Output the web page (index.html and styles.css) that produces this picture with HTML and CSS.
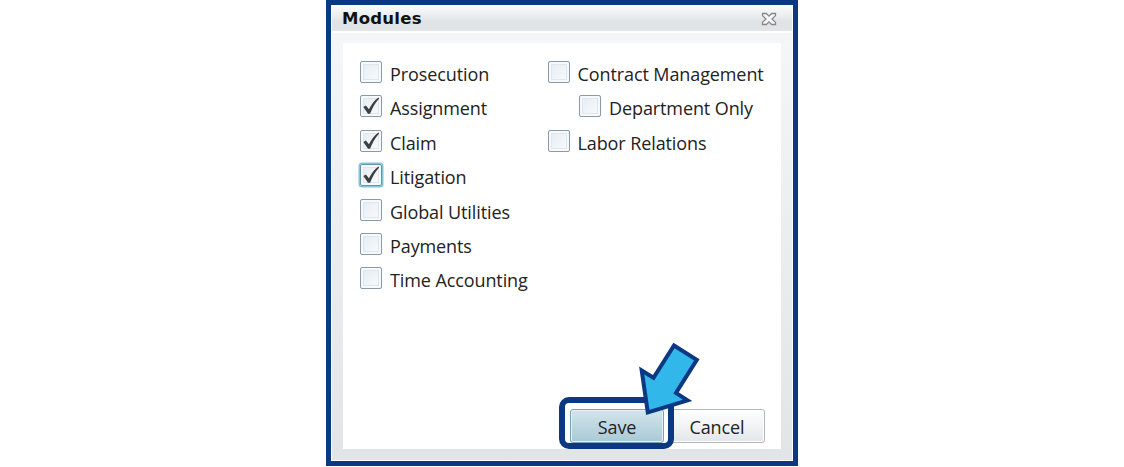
FILE: index.html
```html
<!DOCTYPE html>
<html lang="en">
<head>
    <meta charset="UTF-8">
    <meta name="viewport" content="width=device-width, initial-scale=1.0">
    <title>Modules</title>
    <link rel="stylesheet" href="styles.css">
</head>
<body>
    <div class="dialog">
        <div class="dialog-header">
            <span class="dialog-title">Modules</span>
            <svg class="close-btn" width="16" height="14" viewBox="0 0 16 14">
                <path d="M1.5 1.5H5.3L8 4.2L10.7 1.5H14.5V3.6L11 7L14.5 10.4V12.5H10.7L8 9.8L5.3 12.5H1.5V10.4L5 7L1.5 3.6Z"/>
            </svg>
        </div>
        <div class="dialog-body">
            <div class="panel">
                <div class="modules">
                    <div class="column">
                        <div class="option"><span class="box"></span><span class="label">Prosecution</span></div>
                        <div class="option"><span class="box"><svg class="check" viewBox="0 0 18 18"><path d="M2 9.5L4.2 8.2L6.8 11.4C9 7 11.5 3.5 15 1.2L15.6 2.1C12 6 9.6 10.5 7.8 15.2H6Z"/></svg></span><span class="label">Assignment</span></div>
                        <div class="option"><span class="box"><svg class="check" viewBox="0 0 18 18"><path d="M2 9.5L4.2 8.2L6.8 11.4C9 7 11.5 3.5 15 1.2L15.6 2.1C12 6 9.6 10.5 7.8 15.2H6Z"/></svg></span><span class="label">Claim</span></div>
                        <div class="option"><span class="box focused"><svg class="check" viewBox="0 0 18 18"><path d="M2 9.5L4.2 8.2L6.8 11.4C9 7 11.5 3.5 15 1.2L15.6 2.1C12 6 9.6 10.5 7.8 15.2H6Z"/></svg></span><span class="label">Litigation</span></div>
                        <div class="option"><span class="box"></span><span class="label">Global Utilities</span></div>
                        <div class="option"><span class="box"></span><span class="label">Payments</span></div>
                        <div class="option"><span class="box"></span><span class="label">Time Accounting</span></div>
                    </div>
                    <div class="column">
                        <div class="option"><span class="box"></span><span class="label">Contract Management</span></div>
                        <div class="option sub"><span class="box"></span><span class="label">Department Only</span></div>
                        <div class="option"><span class="box"></span><span class="label">Labor Relations</span></div>
                    </div>
                </div>
                <div class="actions">
                    <button class="btn save-btn">Save</button>
                    <button class="btn cancel-btn">Cancel</button>
                </div>
            </div>
        </div>
        <div class="highlight"></div>
        <svg class="arrow" width="64" height="76" viewBox="636 340 64 76">
            <path d="M674 345.5L696.8 359.8L676 393L687.5 400.3L647.8 412.3L641.7 370.5L653.5 377.8Z"/>
        </svg>
    </div>
</body>
</html>
```

FILE: styles.css
```css
body {
    margin: 0;
    background: #fff;
    font-family: 'Open Sans', 'Noto Sans', sans-serif;
    color: #222;
}
.dialog {
    position: relative;
    box-sizing: border-box;
    width: 472px;
    height: 466px;
    margin-left: 326px;
    border: 5px solid #0b3882;
    display: flex;
    flex-direction: column;
}
.dialog-header {
    box-sizing: border-box;
    height: 26px;
    margin: 0 1px;
    padding: 0 15px 0 10px;
    display: flex;
    align-items: center;
    justify-content: space-between;
    background: linear-gradient(#fdfdfd, #e0e3e6 65%, #e2e5e8);
}
.dialog-title {
    font: bold 16.5px/26px 'DejaVu Sans', sans-serif;
    letter-spacing: 0.25px;
    padding-top: 2px;
    color: #111;
}
.close-btn {
    padding-top: 1px;
}
.close-btn path {
    fill: #f6f6f6;
    stroke: #888;
    stroke-width: 1.3;
}
.dialog-body {
    flex: 1;
    display: flex;
    margin: 2px 1px 1px;
    padding: 10px 11px 11px;
    background: linear-gradient(#f4f6f8, #e1e5e8);
}
.panel {
    flex: 1;
    display: flex;
    flex-direction: column;
    justify-content: space-between;
    background: #fff;
}
.modules {
    display: flex;
    padding: 11.8px 0 0 17px;
}
.column {
    width: 187.5px;
}
.option {
    height: 34.4px;
    display: flex;
    align-items: center;
    gap: 8px;
    white-space: nowrap;
}
.option.sub {
    margin-left: 31.5px;
}
.box {
    box-sizing: border-box;
    flex: none;
    width: 22px;
    height: 22px;
    border: 1.5px solid #8a9aa8;
    border-radius: 2px;
    background: linear-gradient(135deg, #e3ebf3, #fafcfe);
    box-shadow: inset 0 0 0 2px #f7fafc, inset 0 0 0 3px #dfe6ec;
}
.box.focused {
    border-color: #5f97ab;
    box-shadow: 0 0 0 1.5px #83c5d6, inset 0 0 0 2px #f7fafc, inset 0 0 0 3px #dfe6ec;
}
.check {
    display: block;
    width: 21px;
    height: 21px;
    fill: #3d3f43;
}
.label {
    font-size: 18px;
    line-height: 24px;
    letter-spacing: -0.1px;
    position: relative;
    top: 2px;
}
.actions {
    display: flex;
    gap: 5px;
    padding: 0 16px 6px 227px;
}
.btn {
    box-sizing: border-box;
    height: 34px;
    padding: 2px 0 0;
    border: 1px solid #b4b6b9;
    border-radius: 3px;
    font: 18px/24px 'Open Sans', 'Noto Sans', sans-serif;
    letter-spacing: -0.1px;
    color: #222;
}
.save-btn {
    width: 94px;
    border-color: #76a2b5;
    background: linear-gradient(#d3e5eb, #a9c9d5);
    box-shadow: inset 0 0 0 1px #e6f2f6;
}
.cancel-btn {
    flex: 1;
    background: linear-gradient(#fff, #e3e7ea);
    box-shadow: inset 0 0 0 1px #fff;
}
/* callout around the Save button */
.highlight {
    position: absolute;
    box-sizing: border-box;
    left: 228px;
    top: 392px;
    width: 115px;
    height: 52px;
    border: 6px solid #0b3882;
    border-radius: 10px;
}
.arrow {
    position: absolute;
    left: 305px;
    top: 335px;
}
.arrow path {
    fill: #31b7ea;
    stroke: #0b3882;
    stroke-width: 4;
}
```
